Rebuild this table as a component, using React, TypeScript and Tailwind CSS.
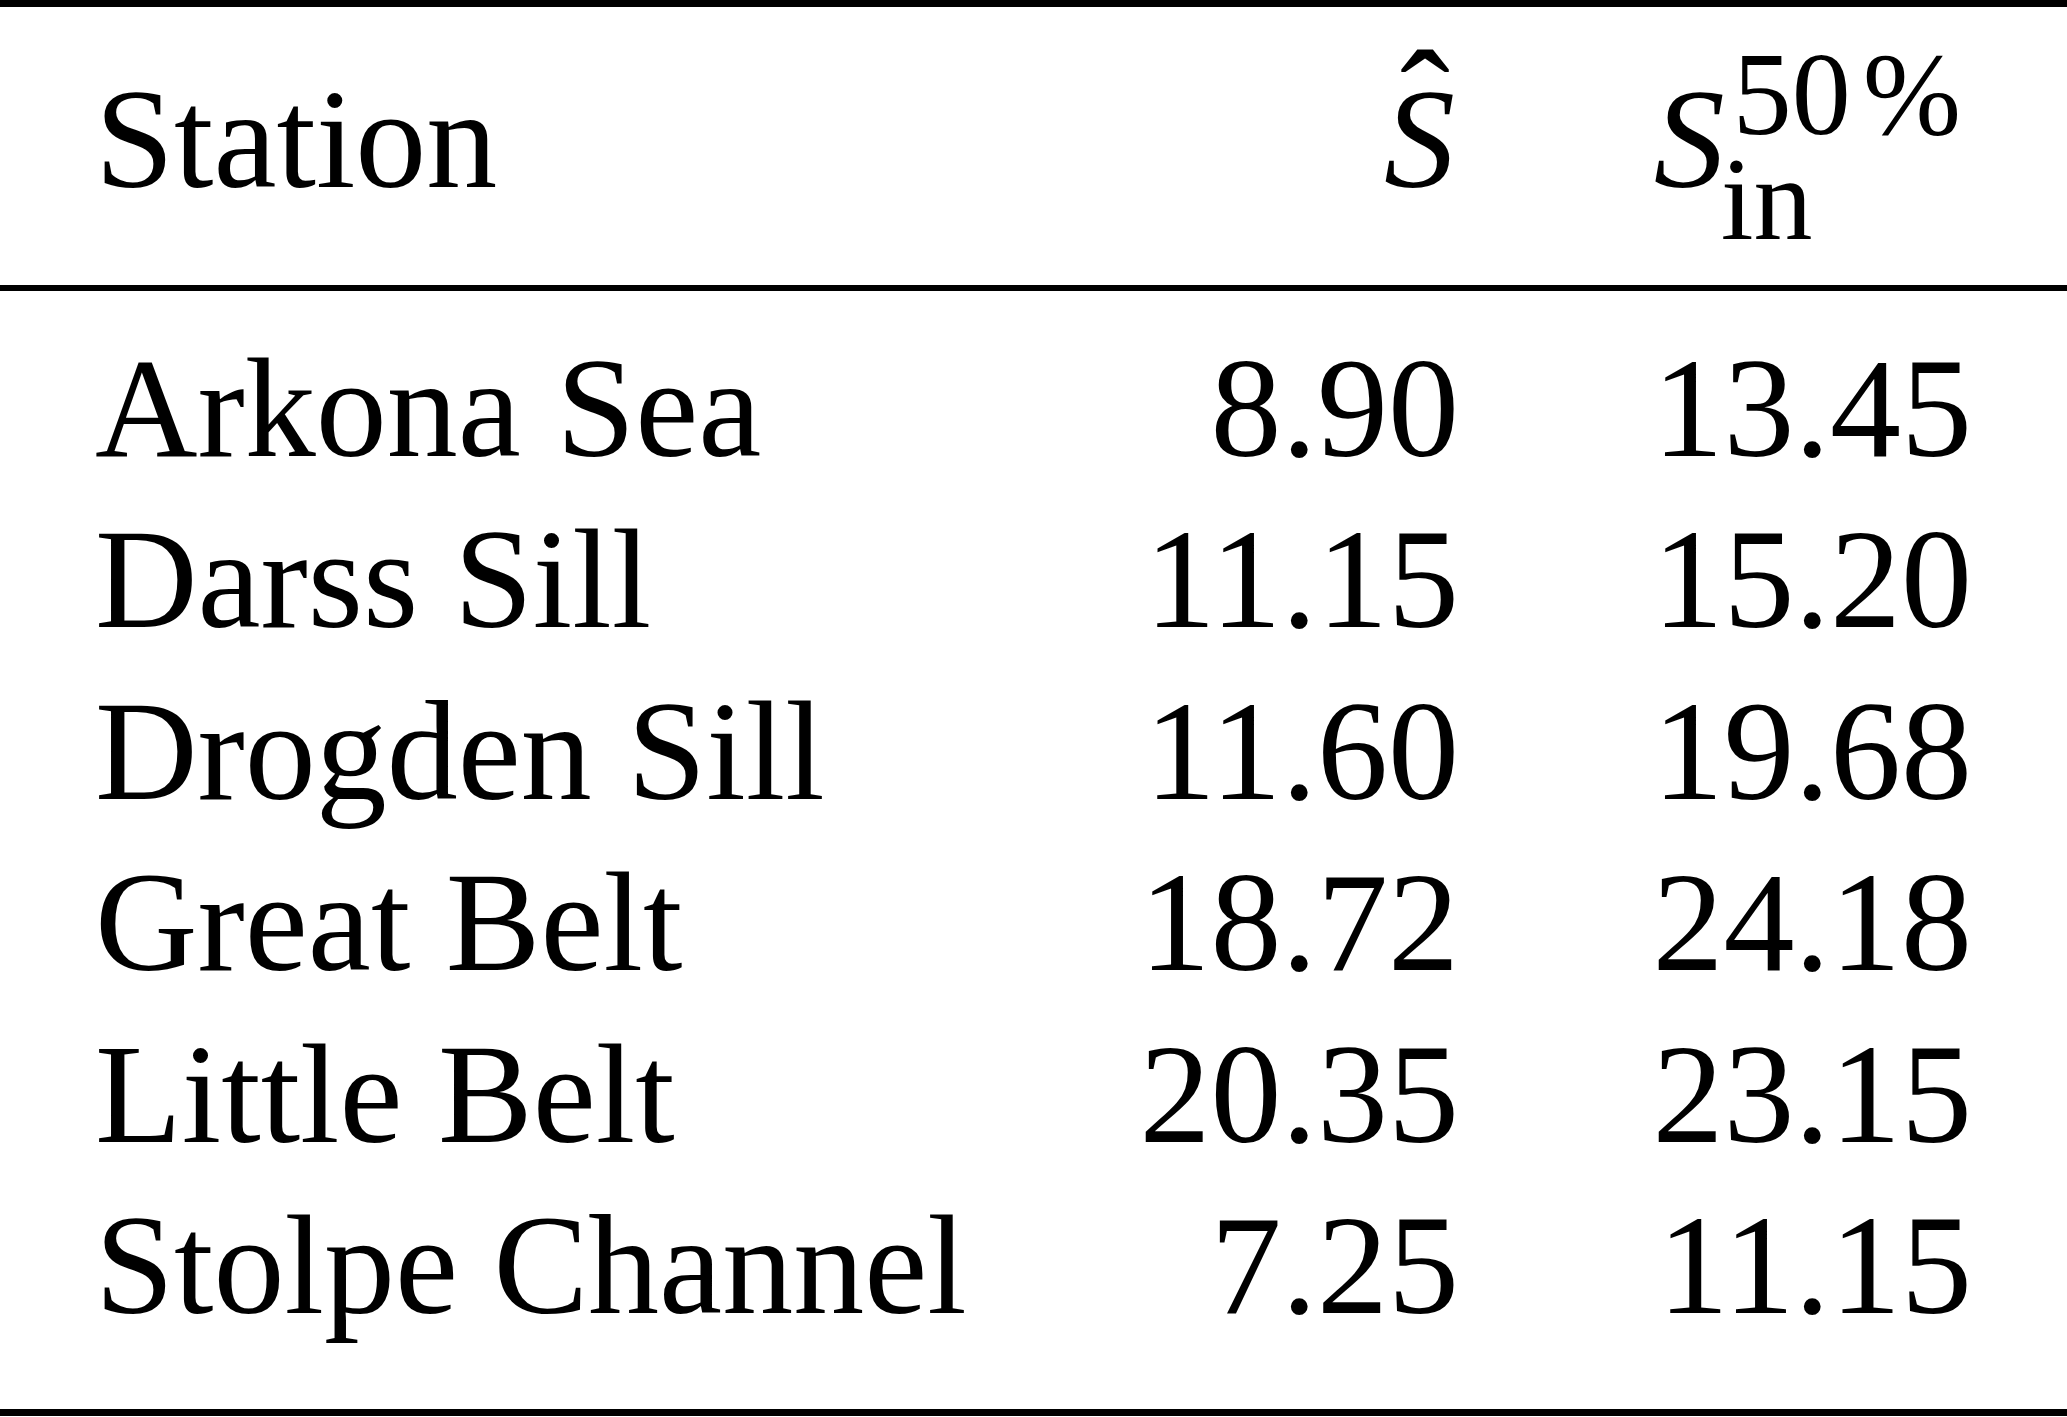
import React from "react";

const rows: [string, string, string][] = [
  ["Arkona Sea", "8.90", "13.45"],
  ["Darss Sill", "11.15", "15.20"],
  ["Drogden Sill", "11.60", "19.68"],
  ["Great Belt", "18.72", "24.18"],
  ["Little Belt", "20.35", "23.15"],
  ["Stolpe Channel", "7.25", "11.15"],
];

export default function App() {
  return (
    <div
      className="w-[2067px] h-[1417px] bg-white text-black overflow-hidden"
      style={{ fontFamily: '"Liberation Serif", "Times New Roman", serif' }}
    >
      <div className="h-[7px] bg-black" />
      <div className="h-[278px] px-[95px] pt-[35px] grid grid-cols-[1fr_400px_513px] items-baseline text-[142px] leading-[142px]">
        <div>Station</div>
        <div className="text-right pr-[4px]">
          <span className="relative inline-block italic">
            S
            <span className="absolute left-[16px] top-[-40px] not-italic text-[150px] leading-[150px]">ˆ</span>
          </span>
        </div>
        <div className="text-right pr-[11px]">
          <span className="italic">S</span>
          <span className="ml-[8px] inline-flex flex-col items-start align-[53px] text-[118px] leading-[105px]">
            <span className="whitespace-nowrap">
              50<span className="ml-[12px]">%</span>
            </span>
            <span className="ml-[-12px]">in</span>
          </span>
        </div>
      </div>
      <div className="h-[6px] bg-black" />
      <div className="pt-[32px] pb-[58px] px-[95px] text-[142px] leading-[171.4px]">
        {rows.map(([name, a, b]) => (
          <div key={name} className="grid grid-cols-[1fr_400px_513px]">
            <div className="whitespace-nowrap">{name}</div>
            <div className="text-right">{a}</div>
            <div className="text-right">{b}</div>
          </div>
        ))}
      </div>
      <div className="h-[7px] bg-black" />
    </div>
  );
}
